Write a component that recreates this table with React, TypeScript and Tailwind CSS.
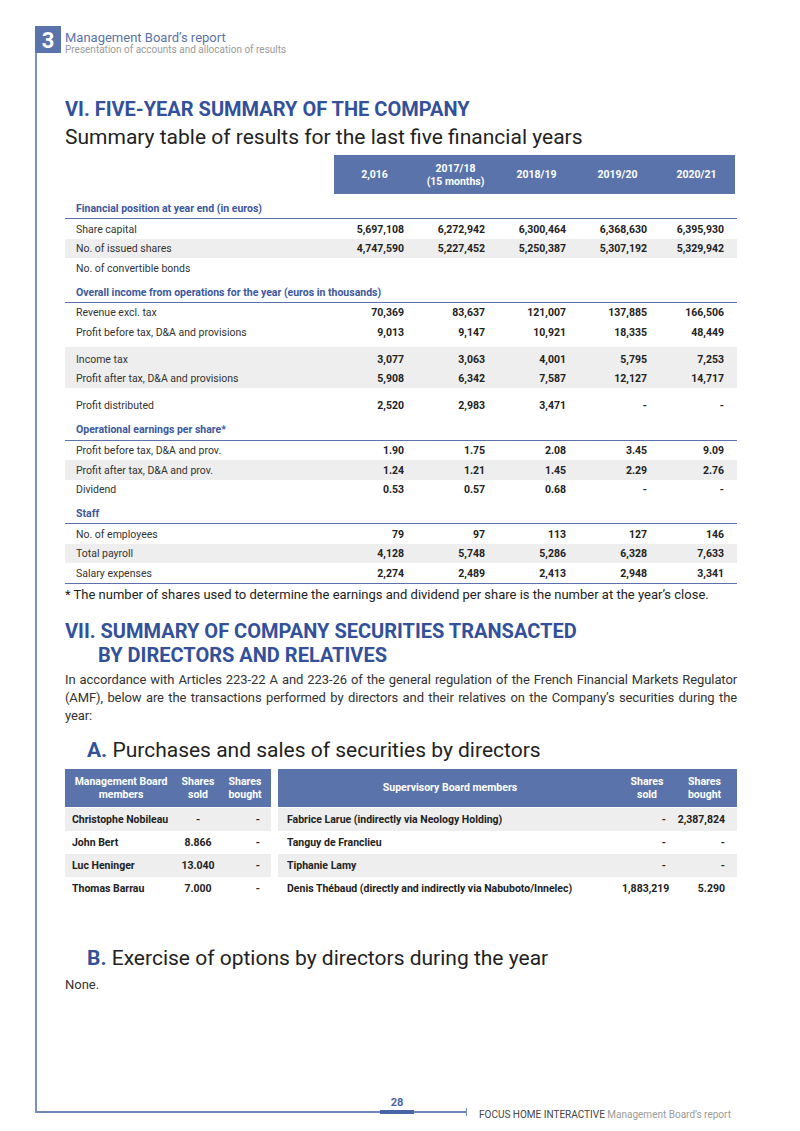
import React from 'react';

const FONT = "font-['Roboto','Liberation_Sans',sans-serif]";

type Row = { label: string; values?: string[]; gray?: boolean };

const cols = 'grid grid-cols-[269px_81px_81px_81px_81px_77px]';

function DataRow({ label, values, gray }: Row) {
  return (
    <div className={`${cols} h-[19.5px] items-center pt-[1.5px] text-[10.5px] leading-[14px] ${gray ? 'bg-[#eeeeee]' : ''}`}>
      <div className="pl-[11px] text-[#333]">{label}</div>
      {(values ?? ['', '', '', '', '']).map((v, i) => (
        <div key={i} className="pr-[11px] text-right font-bold text-[#222]">
          {v}
        </div>
      ))}
    </div>
  );
}

function SectionLabel({ children, tall }: { children: React.ReactNode; tall?: boolean }) {
  return (
    <div
      className={`${tall ? 'h-[26px]' : 'h-[25px]'} border-b border-[#5b73aa] pl-[11px] pt-[8px] text-[10.5px] font-bold leading-[14px] text-[#3c57a0]`}
    >
      {children}
    </div>
  );
}

const mgmt = [
  { name: 'Christophe Nobileau', sold: '-', bought: '-' },
  { name: 'John Bert', sold: '8.866', bought: '-' },
  { name: 'Luc Heninger', sold: '13.040', bought: '-' },
  { name: 'Thomas Barrau', sold: '7.000', bought: '-' },
];

const supervisory = [
  { name: 'Fabrice Larue (indirectly via Neology Holding)', sold: '-', bought: '2,387,824' },
  { name: 'Tanguy de Franclieu', sold: '-', bought: '-' },
  { name: 'Tiphanie Lamy', sold: '-', bought: '-' },
  { name: 'Denis Thébaud (directly and indirectly via Nabuboto/Innelec)', sold: '1,883,219', bought: '5.290' },
];

export default function App() {
  return (
    <div className={`${FONT} flex h-[1131px] w-[800px] flex-col bg-white pb-[18px] pl-[35px] pt-[26px] text-[#222]`}>
      {/* chapter header */}
      <div className="flex h-[27px] items-start">
        <div className="flex h-[27px] w-[26px] items-end justify-center bg-[#5a73aa] text-[22px] font-bold leading-[24px] text-white">
          3
        </div>
        <div className="ml-[4px] pt-[5px]">
          <div className="text-[13px] leading-[13px] text-[#5a73aa]">Management Board’s report</div>
          <div className="text-[10px] leading-[11px] text-[#9b9b9b]">Presentation of accounts and allocation of results</div>
        </div>
      </div>

      <div className="flex flex-1 flex-col border-l-2 border-[#7c91c1]">
        <div className="pl-[28px] pr-[63px]">
          <h1 className="mt-[44px] text-[20px] font-bold leading-[24px] text-[#33509b]">
            VI. FIVE-YEAR SUMMARY OF THE COMPANY
          </h1>
          <h2 className="mt-[2px] text-[21px] leading-[28px] text-[#222]">
            Summary table of results for the last five financial years
          </h2>

          {/* five-year table */}
          <div className="mt-[4px]">
            <div className={`${cols} h-[39px]`}>
              <div />
              <div className="col-span-5 grid grid-cols-[81px_81px_81px_81px_77px] items-center bg-[#5a73aa] text-[10.5px] font-bold leading-[13px] text-white">
                <div className="text-center">2,016</div>
                <div className="text-center">
                  2017/18
                  <br />
                  (15 months)
                </div>
                <div className="text-center">2018/19</div>
                <div className="text-center">2019/20</div>
                <div className="text-center">2020/21</div>
              </div>
            </div>

            <SectionLabel>Financial position at year end (in euros)</SectionLabel>
            <DataRow label="Share capital" values={['5,697,108', '6,272,942', '6,300,464', '6,368,630', '6,395,930']} />
            <DataRow label="No. of issued shares" values={['4,747,590', '5,227,452', '5,250,387', '5,307,192', '5,329,942']} gray />
            <DataRow label="No. of convertible bonds" />

            <SectionLabel>Overall income from operations for the year (euros in thousands)</SectionLabel>
            <DataRow label="Revenue excl. tax" values={['70,369', '83,637', '121,007', '137,885', '166,506']} />
            <DataRow label="Profit before tax, D&A and provisions" values={['9,013', '9,147', '10,921', '18,335', '48,449']} />
            <div className="mt-[5px] bg-[#eeeeee] pt-[2.5px]">
              <DataRow label="Income tax" values={['3,077', '3,063', '4,001', '5,795', '7,253']} />
              <DataRow label="Profit after tax, D&A and provisions" values={['5,908', '6,342', '7,587', '12,127', '14,717']} />
            </div>
            <div className="mt-[7px]">
              <DataRow label="Profit distributed" values={['2,520', '2,983', '3,471', '-', '-']} />
            </div>

            <SectionLabel tall>Operational earnings per share*</SectionLabel>
            <DataRow label="Profit before tax, D&A and prov." values={['1.90', '1.75', '2.08', '3.45', '9.09']} />
            <DataRow label="Profit after tax, D&A and prov." values={['1.24', '1.21', '1.45', '2.29', '2.76']} gray />
            <DataRow label="Dividend" values={['0.53', '0.57', '0.68', '-', '-']} />

            <SectionLabel>Staff</SectionLabel>
            <DataRow label="No. of employees" values={['79', '97', '113', '127', '146']} />
            <DataRow label="Total payroll" values={['4,128', '5,748', '5,286', '6,328', '7,633']} gray />
            <div className="border-b border-[#5b73aa]">
              <DataRow label="Salary expenses" values={['2,274', '2,489', '2,413', '2,948', '3,341']} />
            </div>
          </div>
          <p className="mt-[3px] text-[13px] leading-[16px] text-[#222]">
            * The number of shares used to determine the earnings and dividend per share is the number at the year’s close.
          </p>

          {/* section VII */}
          <h1 className="mt-[16px] text-[20px] font-bold leading-[24px] text-[#33509b]">
            <div>VII. SUMMARY OF COMPANY SECURITIES TRANSACTED</div>
            <div className="pl-[33px]">BY DIRECTORS AND RELATIVES</div>
          </h1>
          <div className="mt-[4px] text-[13px] leading-[18px] tracking-[-0.1px] text-[#333]">
            <div className="text-justify [text-align-last:justify]">
              In accordance with Articles 223-22 A and 223-26 of the general regulation of the French Financial Markets Regulator
            </div>
            <div className="text-justify [text-align-last:justify]">
              (AMF), below are the transactions performed by directors and their relatives on the Company’s securities during the
            </div>
            <div>year:</div>
          </div>

          <h3 className="mt-[11px] pl-[22px] text-[21px] leading-[28px] text-[#222]">
            <span className="font-bold text-[#33509b]">A.</span> Purchases and sales of securities by directors
          </h3>

          {/* directors tables */}
          <div className="mt-[5px] flex gap-[7px] text-[10.5px] font-bold leading-[14px]">
            <div className="w-[206px]">
              <div className="grid h-[38px] grid-cols-[112px_42px_52px] items-center bg-[#5a73aa] leading-[13px] text-white">
                <div className="text-center">
                  Management Board
                  <br />
                  members
                </div>
                <div className="text-center">
                  Shares
                  <br />
                  sold
                </div>
                <div className="text-center">
                  Shares
                  <br />
                  bought
                </div>
              </div>
              <div className="mt-px">
                {mgmt.map((m, i) => (
                  <div
                    key={m.name}
                    className={`grid h-[23px] grid-cols-[112px_42px_52px] items-center pt-[2px] ${i % 2 === 0 ? 'bg-[#eeeeee]' : ''}`}
                  >
                    <div className="pl-[7px]">{m.name}</div>
                    <div className="text-center">{m.sold}</div>
                    <div className="pr-[11px] text-right">{m.bought}</div>
                  </div>
                ))}
              </div>
            </div>

            <div className="flex-1">
              <div className="grid h-[38px] grid-cols-[1fr_50px_65px] items-center bg-[#5a73aa] leading-[13px] text-white">
                <div className="text-center">Supervisory Board members</div>
                <div className="text-center">
                  Shares
                  <br />
                  sold
                </div>
                <div className="text-center">
                  Shares
                  <br />
                  bought
                </div>
              </div>
              <div className="mt-px">
                {supervisory.map((s, i) => (
                  <div
                    key={s.name}
                    className={`grid h-[23px] grid-cols-[1fr_50px_65px] items-center pt-[2px] ${i % 2 === 0 ? 'bg-[#eeeeee]' : ''}`}
                  >
                    <div className="pl-[9px]">{s.name}</div>
                    <div className="pr-[6px] text-right">{s.sold}</div>
                    <div className="pr-[12px] text-right">{s.bought}</div>
                  </div>
                ))}
              </div>
            </div>
          </div>

          <h3 className="mt-[44px] pl-[22px] text-[21px] leading-[28px] text-[#222]">
            <span className="font-bold text-[#33509b]">B.</span> Exercise of options by directors during the year
          </h3>
          <p className="mt-[4px] text-[13px] leading-[18px] text-[#333]">None.</p>
        </div>

        {/* footer */}
        <div className="mt-auto flex items-end">
          <div className="w-[343px] border-b-2 border-[#6f86ba]" />
          <div className="flex w-[34px] flex-col items-center">
            <div className="mb-[1px] text-[11px] font-bold leading-[12px] text-[#4a65a5]">28</div>
            <div className="-mb-[1px] h-[4px] w-full bg-[#4a65a5]" />
          </div>
          <div className="w-[52px] border-b-2 border-[#6f86ba]" />
          <div className="-mb-[3px] h-[8px] w-px bg-[#6f86ba]" />
          <div className="-mb-[8px] ml-[12px] whitespace-nowrap text-[10px] leading-[12px]">
            <span className="text-[#444]">FOCUS HOME INTERACTIVE</span>{' '}
            <span className="text-[#9b9b9b]">Management Board’s report</span>
          </div>
        </div>
      </div>
    </div>
  );
}
